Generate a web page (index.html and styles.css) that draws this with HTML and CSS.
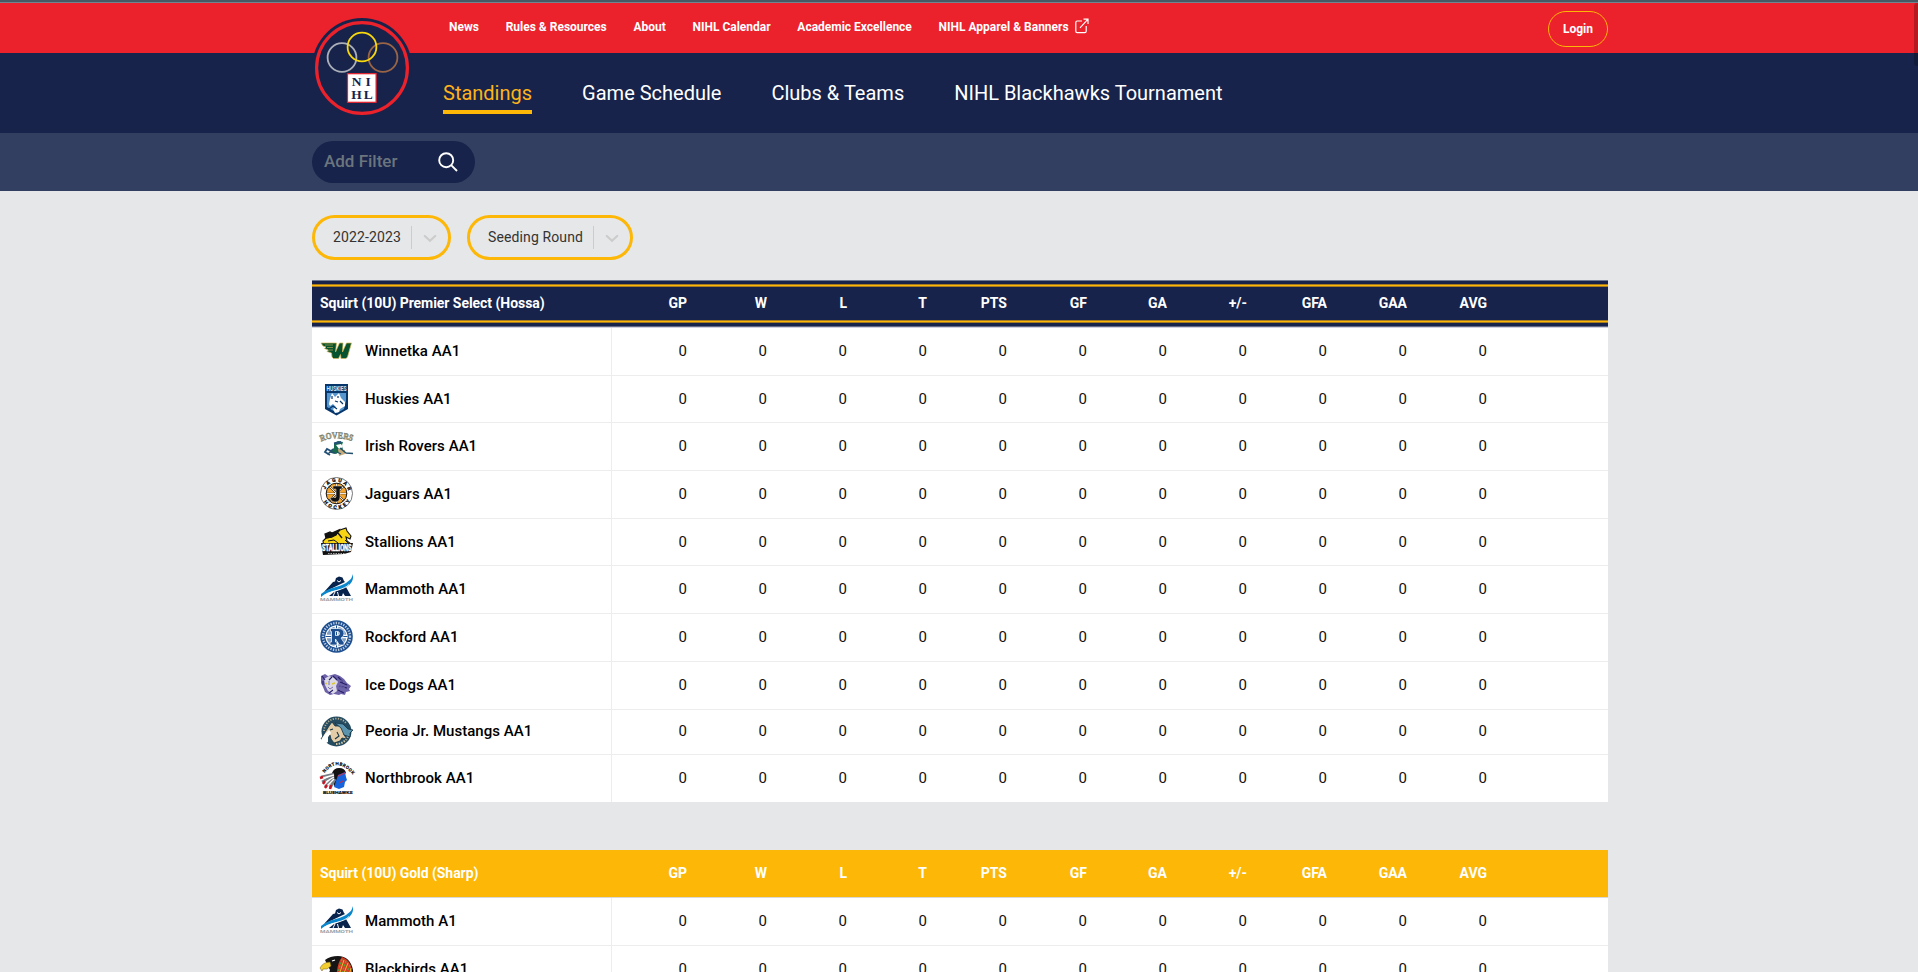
FILE: index.html
```html
<!DOCTYPE html>
<html lang="en">
<head>
<meta charset="utf-8">
<title>NIHL Standings</title>
<link rel="stylesheet" href="styles.css">
</head>
<body>
<svg class="defs" width="0" height="0">
  <symbol id="mammoth" viewBox="0 0 33 33">
    <path d="M4 20L13 10l2-.5 1-3.500 3-1.500 3.500 1 1.500 3.500 1 1z" fill="#08244d"/>
    <path d="M9 24l5-4 12-5 5 9h-6l-2-3-1 3z" fill="#08244d"/>
    <path d="M1 22C9 15 20 15 26 11s6-6 7-9c1 7-3 13-12 15S7 20 1 25z" fill="#0a86cc"/>
    <path d="M4 23.500C14 18 24 18 29 12.500" stroke="#fff" stroke-width=".9" fill="none"/>
    <path d="M13 24l2-4M18.500 24l-1-4M17 8.500l2 1.500 2-1.500" stroke="#fff" stroke-width="1" fill="none"/>
    <text x="0" y="29" font-size="3.700" textLength="33" lengthAdjust="spacingAndGlyphs" font-weight="700" fill="#9aa0a4">MAMMOTH</text>
  </symbol>
</svg>
<header>
  <div class="top-strip"></div>
  <div class="utility">
    <div class="wrap utility-row">
      <a class="brand" href="#">
        <svg width="100" height="100" viewBox="0 0 100 100">
          <circle cx="50" cy="50" r="50" fill="#17234b"/>
          <circle cx="50" cy="50" r="45.400" fill="none" stroke="#eb212b" stroke-width="3.200"/>
          <circle cx="30" cy="39.500" r="14.400" fill="none" stroke="#abafb8" stroke-width="1.800"/>
          <circle cx="71" cy="39.500" r="14.400" fill="none" stroke="#996545" stroke-width="1.800"/>
          <circle cx="50" cy="29" r="14.400" fill="none" stroke="#f8d70c" stroke-width="1.800"/>
          <rect x="35.500" y="55.700" width="28.600" height="28.600" fill="#fff" stroke="#eb212b" stroke-width="1.200"/>
          <g font-family="Liberation Serif" font-weight="700" font-size="13.500" fill="#17234b" text-anchor="middle">
            <text x="44.500" y="68.300">N</text><text x="56.200" y="68.300">I</text>
            <text x="44.500" y="80.600">H</text><text x="56.200" y="80.600">L</text>
          </g>
        </svg>
      </a>
      <nav class="utility-nav">
        <a href="#">News</a><a href="#">Rules &amp; Resources</a><a href="#">About</a><a href="#">NIHL Calendar</a><a href="#">Academic Excellence</a><a href="#">NIHL Apparel &amp; Banners
          <svg width="14" height="16" viewBox="0 0 14 16" fill="none" stroke="#fff" stroke-width="1.200"><path d="M7 3H2.200Q.8 3 .8 4.400V13.200Q.8 14.600 2.200 14.600H9.800Q11.200 14.600 11.200 13.200V8M8.500 1.200H13V6M13 1.200L5 9.800"/></svg></a>
      </nav>
      <a class="login" href="#">Login</a>
    </div>
  </div>
  <div class="main-bar">
    <nav class="wrap main-nav">
      <a class="active" href="#">Standings</a><a href="#">Game Schedule</a><a href="#">Clubs &amp; Teams</a><a href="#">NIHL Blackhawks Tournament</a>
    </nav>
  </div>
  <div class="filter-bar">
    <div class="wrap">
      <div class="filter"><span>Add Filter</span>
        <svg width="20" height="20" viewBox="0 0 20 20" fill="none" stroke="#fff" stroke-width="1.900"><circle cx="8.200" cy="8.200" r="7"/><path d="M13.200 13.200L19 19"/></svg>
      </div>
    </div>
  </div>
</header>
<main class="wrap">
  <div class="selects">
    <div class="select year"><span>2022-2023</span><i></i><svg width="20" height="20" viewBox="0 0 20 20"><path d="M4.800 8l5.200 4.800L15.200 8" fill="none" stroke="#ccc" stroke-width="2.200" stroke-linecap="round"/></svg></div>
    <div class="select round"><span>Seeding Round</span><i></i><svg width="20" height="20" viewBox="0 0 20 20"><path d="M4.800 8l5.200 4.800L15.200 8" fill="none" stroke="#ccc" stroke-width="2.200" stroke-linecap="round"/></svg></div>
  </div>

  <section class="standings">
    <div class="head navy"><b>Squirt (10U) Premier Select (Hossa)</b><b>GP</b><b>W</b><b>L</b><b>T</b><b>PTS</b><b>GF</b><b>GA</b><b>+/-</b><b>GFA</b><b>GAA</b><b>AVG</b></div>
    <div class="row"><div class="team"><svg viewBox="0 0 33 33"><path d="M1 9H16.500l-1 9 4-9h3.500l-.5 9 4-9h5L27.500 23l-1.500 1.500h-5l-.5-4-2 4h-5l-1.500-1.500-.5-4-4.500-1.500 1.500-1.500-4-1.500 1.500-1.500-3-1z" fill="#07532f" stroke="#d9b455" stroke-width=".7"/><path d="M5 11h8M7 13.500h6M9 16h4" stroke="#d9b455" stroke-width=".6"/></svg>Winnetka AA1</div><span>0</span><span>0</span><span>0</span><span>0</span><span>0</span><span>0</span><span>0</span><span>0</span><span>0</span><span>0</span><span>0</span></div>
    <div class="row h47"><div class="team"><svg viewBox="0 0 33 33"><path d="M5 1H28V26L16.500 32.500 5 26z" fill="#07366b"/><path d="M7 10h19v8l-2 8-7 4-10-6z" fill="#5596cf"/><path d="M9 21l1-5 2-6 3 4 4-4 2 5 4 4v4l-5 3-1 3-4 1-2-4 3-2-3-3-3 2z" fill="#fff"/><path d="M12 13v3M18 13v2M9 26l4-3 4 3M20 18l3 3M15 18l3 1" stroke="#07366b" stroke-width="1.200" fill="none"/><text x="6.500" y="8" font-size="7" textLength="20" lengthAdjust="spacingAndGlyphs" font-weight="700" fill="#dce8f3">HUSKIES</text></svg>Huskies AA1</div><span>0</span><span>0</span><span>0</span><span>0</span><span>0</span><span>0</span><span>0</span><span>0</span><span>0</span><span>0</span><span>0</span></div>
    <div class="row"><div class="team"><svg viewBox="0 0 33 33"><path id="rov" d="M1 12.500Q16 6 33 12.500" fill="none"/><text font-size="9" font-weight="700" font-family="Liberation Serif" fill="#c8ac7c" stroke="#6b7770" stroke-width=".5"><textPath href="#rov" textLength="32" lengthAdjust="spacingAndGlyphs">ROVERS</textPath></text><path d="M14 14l4-2 5 1-1 3 1 5-4 2-3 2-5-1-1-2 4-3z" fill="#196b50"/><path d="M16 16l5-1 2 3-4 2z" fill="#fff"/><path d="M18 20l7 1v4l-6 2z" fill="#c8ac7c"/><path d="M14 14.500l7-1.500M11 22l-4-2-2 3 5 3" stroke="#244f78" stroke-width="1.800" fill="none"/><path d="M7 25l4-2 4 1M17 23l4 2M20 19l6 5 7 .5M9 24l4-4" stroke="#23506c" stroke-width="1.300" fill="none"/></svg>Irish Rovers AA1</div><span>0</span><span>0</span><span>0</span><span>0</span><span>0</span><span>0</span><span>0</span><span>0</span><span>0</span><span>0</span><span>0</span></div>
    <div class="row"><div class="team"><svg viewBox="0 0 33 33"><circle cx="16.500" cy="16.500" r="16" fill="#fff" stroke="#555" stroke-width=".8"/><circle cx="16.500" cy="16.500" r="10.300" fill="#f5a52b" stroke="#111" stroke-width="1"/><path d="M6.500 16.500h20M16.500 6.500v20M9.500 9.500l14 14M23.500 9.500l-14 14" stroke="#222" stroke-width="1.700"/><path d="M7 16.500h19M16.500 7v19M10 10l13 13M23 10L10 23" stroke="#fff" stroke-width=".9"/><path d="M13 9h9v3h-2v8q0 5-5 5-4 0-5-4l4-1q1 2 2 0v-8h-3z" fill="#111" stroke="#ddd" stroke-width=".5"/><path id="jg1" d="M4.700 16.500A11.800 11.800 0 0 1 28.300 16.500" fill="none"/><path id="jg2" d="M.9 16.500A15.600 15.600 0 0 0 32.100 16.500" fill="none"/><g font-size="5" font-weight="700" fill="#111" stroke="#111" stroke-width=".3"><text><textPath href="#jg1" startOffset="4" textLength="30">JAGUAR</textPath></text><text><textPath href="#jg2" startOffset="9" textLength="32">HOCKEY</textPath></text></g></svg>Jaguars AA1</div><span>0</span><span>0</span><span>0</span><span>0</span><span>0</span><span>0</span><span>0</span><span>0</span><span>0</span><span>0</span><span>0</span></div>
    <div class="row h47"><div class="team"><svg viewBox="0 0 33 33"><path d="M3 15l3-3 6-1 4-3 4-4 6-2 1 3 4 5-1 3-4-2 1 4 4 3v3H4z" fill="#f7d515" stroke="#111" stroke-width="1.100"/><path d="M5 8l5-2 2 1 7-3-3 5-5 2-5 1zM18 7l4 5" fill="#111" stroke="#111" stroke-width="1.300"/><path d="M8 15l6-1 4 3M25 14l3 3" fill="none" stroke="#111" stroke-width="1"/><path d="M1 17H33L31 26 24 28 3 29z" fill="#111"/><text x="2" y="25.300" font-size="9.500" textLength="29.500" lengthAdjust="spacingAndGlyphs" font-weight="700" fill="#fff" stroke="#fff" stroke-width=".5">STALLIONS</text><path d="M8 27.500h17" stroke="#ccc" stroke-width=".8" stroke-dasharray="1.500 1"/></svg>Stallions AA1</div><span>0</span><span>0</span><span>0</span><span>0</span><span>0</span><span>0</span><span>0</span><span>0</span><span>0</span><span>0</span><span>0</span></div>
    <div class="row"><div class="team"><svg viewBox="0 0 33 33"><use href="#mammoth"/></svg>Mammoth AA1</div><span>0</span><span>0</span><span>0</span><span>0</span><span>0</span><span>0</span><span>0</span><span>0</span><span>0</span><span>0</span><span>0</span></div>
    <div class="row"><div class="team"><svg viewBox="0 0 33 33"><circle cx="16.500" cy="16.500" r="16.300" fill="#1d4e8f"/><circle cx="16.500" cy="16.500" r="13.500" fill="none" stroke="#b9cbe0" stroke-width="2.400" stroke-dasharray="1.300 1.300"/><circle cx="16.500" cy="16.500" r="11" fill="#fff"/><circle cx="16.500" cy="16.500" r="10" fill="#7f9cc2"/><path d="M5.500 16.500h22M16.500 5.500v22" stroke="#fff" stroke-width="3.600"/><path d="M5.500 16.500h22M16.500 5.500v22" stroke="#1d4e8f" stroke-width="1"/><path d="M10.500 8.500h8q5.500 0 5.500 5 0 3.500-3 4.500l3 4.500v2.500h-4.500l-4-6v3h1.500V25h-7v-3h1.500V11.500h-1zm5 3v4h2q2 0 2-2t-2-2z" fill="#1d4e8f" stroke="#fff" stroke-width=".7" fill-rule="evenodd"/></svg>Rockford AA1</div><span>0</span><span>0</span><span>0</span><span>0</span><span>0</span><span>0</span><span>0</span><span>0</span><span>0</span><span>0</span><span>0</span></div>
    <div class="row"><div class="team"><svg viewBox="0 0 33 33"><path d="M1 8l4-2 3 2 7-2 5 2 4 3 3 4 4 3-2 3 1 2-4 1-1 3-4-1-2 1-5-1-4 1-5-3-2-5-2-4z" fill="#6d62a8"/><path d="M4 11l5-3 6 2 3 4-2 4 1 5-4 3-5-3-3-6z" fill="#dbd9e6"/><path d="M18 9l5 5M20 14l7 3M19 18l8 2M18 22l6 3M2 8l3 4M13 8l4 4M9 25l4-3M3 13v4M12 9l-3 3" stroke="#251f69" stroke-width="1.100"/><path d="M5 15.500h2M12 16l3-1" stroke="#d9c636" stroke-width="1.400"/><path d="M8 19l2 2 3-2M20 12l4 2M17 17l8 3M20 22l6 1M9 13v4" stroke="#6f66a8" stroke-width=".9" fill="none"/></svg>Ice Dogs AA1</div><span>0</span><span>0</span><span>0</span><span>0</span><span>0</span><span>0</span><span>0</span><span>0</span><span>0</span><span>0</span><span>0</span></div>
    <div class="row h45"><div class="team"><svg viewBox="0 0 33 33"><circle cx="16.500" cy="16.500" r="15" fill="#244b60"/><path d="M4 16A12.500 12.500 0 0 1 26 8" fill="none" stroke="#b8ae93" stroke-width="1.800" stroke-dasharray="1.200 1.400"/><path d="M16 29A12.500 12.500 0 0 0 28 21" fill="none" stroke="#d5c7a4" stroke-width="2" stroke-dasharray="1.500 1.200"/><path d="M9 11l3-4 3 4 5 0 4 5 0 4 3 4-5-1-2 3-6 2-3-4-1-4-5 6-4-2z" fill="#e2cda8" stroke="#153445" stroke-width=".8"/><path d="M15 8l8 1 5 5 5 1-3 3 0 4-6-2-3-7z" fill="#5c93ad" stroke="#153445" stroke-width=".8"/><path d="M1 25l4-6 4-4 2 3-3 4 0 5-4 2-3-1z" fill="#fff"/><path d="M10 15l3-1M17 17l2 4-4 3" stroke="#153445" stroke-width="1.100" fill="none"/></svg>Peoria Jr. Mustangs AA1</div><span>0</span><span>0</span><span>0</span><span>0</span><span>0</span><span>0</span><span>0</span><span>0</span><span>0</span><span>0</span><span>0</span></div>
    <div class="row h47 last"><div class="team"><svg viewBox="0 0 33 33"><path id="nb" d="M4.500 12Q17-4 32 13" fill="none"/><text font-size="4.500" font-weight="700" fill="#111" stroke="#111" stroke-width=".2"><textPath href="#nb" textLength="34">NORTHBROOK</textPath></text><path d="M12 12q2-5 7-5 6 0 7 5l-6 4-3 8-3 1z" fill="#111"/><path d="M18 14l7-3 1 5 1 3-2 2-1 5-5 2-5-2 2-6z" fill="#1763dc"/><path d="M18 15l7-3M19 22l4-2" stroke="#e02630" stroke-width="1"/><path d="M14 13L1 16M14 15L2 21M14 17L5 26M15 18L10 27" stroke="#777e86" stroke-width="2.800"/><path d="M14 14L3 17M14 16L4 22M14 18L7 25" stroke="#fff" stroke-width="1.300"/><path d="M0 17l3-1M3 23l2-3M5 27l2-3M10 28l1-4" stroke="#c81422" stroke-width="2.400"/><text x="3" y="33" font-size="4.400" textLength="29.500" lengthAdjust="spacingAndGlyphs" font-weight="700" fill="#111" stroke="#111" stroke-width=".2">BLUEHAWKS</text></svg>Northbrook AA1</div><span>0</span><span>0</span><span>0</span><span>0</span><span>0</span><span>0</span><span>0</span><span>0</span><span>0</span><span>0</span><span>0</span></div>
  </section>

  <section class="standings">
    <div class="head gold"><b>Squirt (10U) Gold (Sharp)</b><b>GP</b><b>W</b><b>L</b><b>T</b><b>PTS</b><b>GF</b><b>GA</b><b>+/-</b><b>GFA</b><b>GAA</b><b>AVG</b></div>
    <div class="row"><div class="team"><svg viewBox="0 0 33 33"><use href="#mammoth"/></svg>Mammoth A1</div><span>0</span><span>0</span><span>0</span><span>0</span><span>0</span><span>0</span><span>0</span><span>0</span><span>0</span><span>0</span><span>0</span></div>
    <div class="row"><div class="team"><svg viewBox="0 0 33 33"><path d="M5 8Q10 4 18 4q12 0 15 14v9H7l3-9z" fill="#151515"/><path d="M17 19q1-9 5-14 9 3 10 14v8H16z" fill="#d73b24"/><path d="M22 7l-3 10-1 9M26 9l-3 9-1 8M30 13l-3 7-1 7" stroke="#56a243" stroke-width="1.400" stroke-dasharray="2 1.500" fill="none"/><path d="M24 8l-4 12M28 11l-4 10M31 16l-2 8" stroke="#f2b52b" stroke-width="1"/><path d="M0 16q3-6 10-6l1 4-4 3-4 0-1 2z" fill="#f3ce30" stroke="#6e5712" stroke-width=".5"/><path d="M12 9l3-1" stroke="#fff" stroke-width="1.200"/></svg>Blackbirds AA1</div><span>0</span><span>0</span><span>0</span><span>0</span><span>0</span><span>0</span><span>0</span><span>0</span><span>0</span><span>0</span><span>0</span></div>
  </section>
</main>
<div class="scroll-thumb"></div>
</body>
</html>
```
FILE: styles.css
```css
* { box-sizing: border-box; }
html, body { height: 972px; overflow: hidden; }
body { margin: 0; background: #e6e7e8; font-family: Roboto, sans-serif; color: #1c1c1c; }
a { color: #fff; text-decoration: none; }
.defs { display: none; }
.wrap { width: 1296px; margin: 0 auto; position: relative; left: 1px; }
.top-strip { height: 3px; background: #455a64; border-bottom: 1px solid #70858f; }
.utility { height: 50px; background: #eb212b; }
.utility-row { display: flex; justify-content: space-between; padding: 8px 0 0 137px; }
.brand { position: absolute; left: 0; top: 15px; z-index: 2; height: 100px; }
.brand svg { display: block; }
.utility-nav { display: flex; gap: 26.7px; height: 32px; align-items: center; font-size: 12px; font-weight: 700; }
.utility-nav a { display: flex; align-items: center; white-space: nowrap; }
.utility-nav svg { margin-left: 6px; position: relative; top: -1px; }
.login { width: 60px; height: 36px; border: 1px solid #fdb707; border-radius: 18px; display: flex; align-items: center; justify-content: center; font-size: 12px; font-weight: 700; }
.main-bar { height: 80px; background: #17234b; }
.main-nav { display: flex; gap: 50px; padding: 23px 0 0 131px; font-size: 20px; line-height: 34px; }
.main-nav a { height: 38px; white-space: nowrap; }
.main-nav .active { color: #fdb319; border-bottom: 4px solid #fdb707; }
.filter-bar { height: 58px; padding-top: 8px; background: #333f61; }
.filter { width: 163px; height: 42px; border-radius: 21px; background: #17234b; display: flex; align-items: center; justify-content: space-between; padding: 0 17px 2px 12px; color: #6c757d; font-size: 17px; font-weight: 500; }
.filter svg { position: relative; top: 1px; }
.selects { display: flex; gap: 16px; padding-top: 24px; }
.select { height: 45px; border: 3px solid #fdb707; border-radius: 23px; display: flex; align-items: center; padding: 0 8px 0 18px; font-size: 14px; letter-spacing: .12px; color: #333; }
.select span { flex: 1; white-space: nowrap; padding-bottom: 1px; }
.select i { width: 1px; height: 23px; background: #ccc; margin-right: 8px; }
.year { width: 139px; }
.round { width: 166px; }
.standings { margin-top: 20px; background: #fff; }
.standings + .standings { margin-top: 48px; }
.head, .row { display: grid; grid-template-columns: 300px repeat(11, 80px); align-items: center; }
.head { height: 48px; color: #fff; font-size: 14px; text-align: right; padding-bottom: 2px; }
.head b { font-weight: 700; padding-right: 5px; }
.head b:first-child { text-align: left; padding-left: 8px; letter-spacing: -.05px; }
.navy { background: linear-gradient(#707a90 0 1px, #17234b 1px 4px, #a47b22 4px 5px, #fdb707 5px 6px, #a47b22 6px 7px, #17234b 7px 40px, #a47b22 40px 41px, #fdb707 41px 42px, #a47b22 42px 43px, #17234b 43px 46px, #626988 46px 47px, #d2d2de 47px); }
.gold { background: #fdb707; border-bottom: 1px solid #d8d8d8; }
.row { height: 48px; border-bottom: 1px solid #ededed; font-size: 15px; text-align: right; color: #111; }
.row span { padding: 0 5px 2px 0; }
.team { height: 100%; display: flex; align-items: center; gap: 12px; padding: 0 0 2px 8px; border-right: 1px solid #ededed; font-weight: 500; letter-spacing: .04px; color: #000; }
.team svg { width: 33px; height: 33px; flex: none; overflow: visible; letter-spacing: 0; }
.h47 { height: 47px; }
.h47:not(.last) .team, .h47:not(.last) span { padding-bottom: 0; }
.h45 { height: 45px; }
.last { border-bottom: 0; }
.scroll-thumb { position: absolute; right: 0; top: 3px; width: 4px; height: 63px; background: rgba(0, 0, 0, .22); border-radius: 3px 0 0 3px; }
```
